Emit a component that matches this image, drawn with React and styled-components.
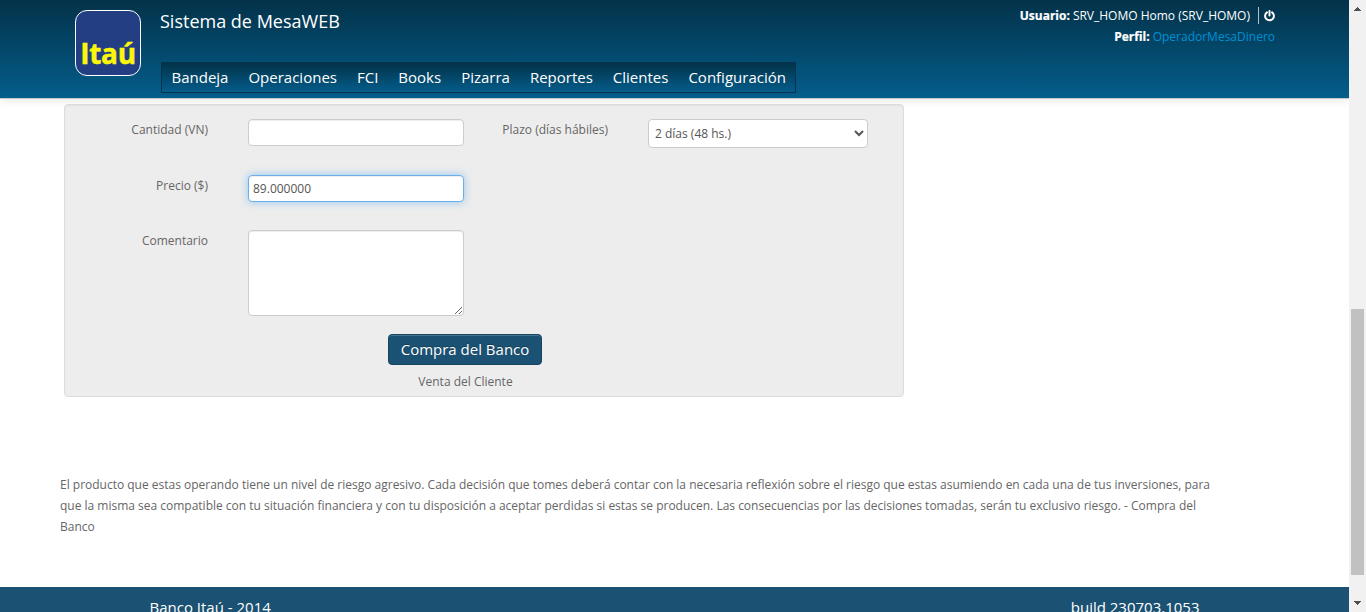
import React from "react";
import styled, { createGlobalStyle } from "styled-components";

const GlobalStyle = createGlobalStyle`
  * { box-sizing: border-box; }
  html, body { margin: 0; overflow: hidden; }
  body {
    background: #fff;
    color: #666;
    font: 12px/21px "Open Sans", sans-serif;
  }
  input, select, textarea, button { font-family: inherit; margin: 0; }
`;

const Window = styled.div`
  display: flex;
  width: 1366px;
  height: 612px;
  overflow: hidden;
`;

const Page = styled.div`
  display: flex;
  flex-direction: column;
  width: 1349px;
  height: 612px;
  overflow: hidden;
`;

const Header = styled.header`
  display: flex;
  flex: none;
  align-items: flex-start;
  height: 99px;
  padding: 0 74px 0 75px;
  background: linear-gradient(#033249, #045d8b);
  border-bottom: 1px solid #c8c8c8;
  box-shadow: 0 1px 10px rgba(0, 0, 0, 0.1);
  color: #fff;
`;

const Logo = styled.div`
  display: flex;
  align-items: flex-end;
  justify-content: center;
  width: 66px;
  height: 66px;
  margin: 10px 20px 0 0;
  padding-bottom: 7px;
  background: #233e83;
  border: 1px solid #fff;
  border-radius: 12px;
  color: #fcf60a;
  font-size: 28px;
  font-weight: 700;
  line-height: 30px;
  letter-spacing: -0.3px;
  -webkit-text-stroke: 0.5px #fcf60a;
`;

const Brand = styled.div`
  display: flex;
  flex-direction: column;
  align-items: flex-start;
`;

const Title = styled.h1`
  height: 21px;
  margin: 11px 0 30px -1px;
  font-size: 18px;
  font-weight: 400;
  line-height: 21px;
  white-space: nowrap;
`;

const Nav = styled.nav`
  display: flex;
  gap: 20px;
  width: 635px;
  height: 31px;
  padding: 0 9.5px;
  border: 1px solid #06344c;
  background: linear-gradient(#033249, #045d8b);
  font-size: 15px;
  line-height: 28px;
  white-space: nowrap;
`;

const Account = styled.div`
  display: flex;
  flex-direction: column;
  align-items: flex-end;
  margin: 5px 0 0 auto;
  white-space: nowrap;
`;

const UserLine = styled.div`
  display: flex;
  align-items: center;
  height: 21px;
  b { margin-right: 3px; -webkit-text-stroke: 0.2px #fff; }
`;

const Divider = styled.span`
  width: 1px;
  height: 17px;
  margin: 0 5px 0 8px;
  background: #b9bfc2;
`;

const Profile = styled.span`
  color: #0090d3;
`;

const Content = styled.main`
  flex: none;
  height: 488px;
  padding: 5px 119px 0 60px;
`;

const Well = styled.section`
  display: flex;
  flex-direction: column;
  width: 840px;
  height: 293px;
  margin-left: 4px;
  padding: 14px 35px 0 36px;
  background: #ededed;
  border: 1px solid #dcdcdc;
  border-radius: 4px;
  box-shadow: inset 0 1px 1px rgba(0, 0, 0, 0.05);
`;

const controlFrame = `
  background: #fff;
  border: 1px solid #ccc;
  border-radius: 4px;
  box-shadow: inset 0 1px 1px rgba(0, 0, 0, 0.075);
  color: #555;
  font-size: 12px;
  outline: none;
`;

const Row = styled.div`
  display: flex;
  align-items: flex-start;
  height: ${(p) => p.$height}px;
`;

const Label = styled.label`
  width: 107px;
  margin-left: ${(p) => p.$offset || 0}px;
  margin-right: 40px;
  text-align: right;
  white-space: nowrap;
`;

const Input = styled.input`
  ${controlFrame}
  width: 216px;
  height: 27px;
  padding: 3px 4px;
  ${(p) => p.$active && `
    border-color: #6bafec;
    box-shadow: inset 0 1px 1px rgba(0,0,0,.075), 0 0 8px rgba(82,168,236,.6);
  `}
`;

const Select = styled.select`
  ${controlFrame}
  width: 220px;
  height: 29px;
  padding: 4px 2px;
  box-shadow: none;
`;

const TextArea = styled.textarea`
  ${controlFrame}
  width: 216px;
  height: 86px;
  resize: both;
`;

const Actions = styled.div`
  display: flex;
  flex-direction: column;
  align-items: center;
  width: 729px;
`;

const Button = styled.button`
  width: 154px;
  height: 31px;
  padding: 0 0 2px;
  margin: 0 1px 6px 0;
  border: 1px solid #154763;
  border-radius: 4px;
  background: #1b5172;
  box-shadow: inset 0 1px 0 rgba(255, 255, 255, 0.2);
  color: #fff;
  font-size: 15px;
  line-height: 20px;
  text-shadow: 0 -1px 0 rgba(0, 0, 0, 0.25);
`;

const Notice = styled.p`
  width: 1170px;
  margin: 77px 0 0;
  letter-spacing: -0.005px;
`;

const Footer = styled.footer`
  display: flex;
  flex: none;
  justify-content: space-between;
  height: 60px;
  padding: 10px 149.5px 0;
  background: #1b5172;
  color: #fff;
  font-size: 15px;
  line-height: 20px;
  white-space: nowrap;
`;

const ScrollTrack = styled.aside`
  display: flex;
  flex-direction: column;
  align-items: center;
  width: 17px;
  height: 612px;
  padding: 7px 0 4px;
  background: #f1f1f1;
`;

const Thumb = styled.div`
  width: 13px;
  height: 266px;
  margin: 298px 0 26px;
  background: #c1c1c1;
`;

function Power() {
  return (
    <svg width="11" height="12" viewBox="0 0 11 12" fill="none" stroke="#fff" strokeWidth="2" strokeLinecap="round">
      <path d="M2.9 2.4a4.4 4.4 0 1 0 5.2 0M5.5 1v4.6" />
    </svg>
  );
}

function Arrow({ down }) {
  return (
    <svg width="7" height="4" viewBox="0 0 7 4" fill="#505050" shapeRendering="crispEdges">
      <path d={down ? "M0 0h7v1H6v1H5v1H4v1H3V3H2V2H1V1H0z" : "M3 0h1v1h1v1h1v1h1v1H0V3h1V2h1V1h1z"} />
    </svg>
  );
}

const sections = ["Bandeja", "Operaciones", "FCI", "Books", "Pizarra", "Reportes", "Clientes", "Configuración"];

export default function App() {
  return (
    <Window>
      <GlobalStyle />
      <Page>
        <Header>
          <Logo>Itaú</Logo>
          <Brand>
            <Title>Sistema de MesaWEB</Title>
            <Nav>{sections.map((name) => <span key={name}>{name}</span>)}</Nav>
          </Brand>
          <Account>
            <UserLine><b>Usuario:</b>SRV_HOMO Homo (SRV_HOMO)<Divider /><Power /></UserLine>
            <UserLine><b>Perfil:</b><Profile>OperadorMesaDinero</Profile></UserLine>
          </Account>
        </Header>
        <Content>
          <Well>
            <Row $height={56}>
              <Label>Cantidad (VN)</Label>
              <Input />
              <Label $offset={37}>Plazo (días hábiles)</Label>
              <Select defaultValue="48"><option value="48">2 días (48 hs.)</option></Select>
            </Row>
            <Row $height={55}>
              <Label>Precio ($)</Label>
              <Input $active defaultValue="89.000000" />
            </Row>
            <Row $height={104}>
              <Label>Comentario</Label>
              <TextArea />
            </Row>
            <Actions>
              <Button>Compra del Banco</Button>
              <span>Venta del Cliente</span>
            </Actions>
          </Well>
          <Notice>
            El producto que estas operando tiene un nivel de riesgo agresivo. Cada decisión que tomes deberá contar con la necesaria reflexión sobre el riesgo que estas asumiendo en cada una de tus inversiones, para que la misma sea compatible con tu situación financiera y con tu disposición a aceptar perdidas si estas se producen. Las consecuencias por las decisiones tomadas, serán tu exclusivo riesgo. - Compra del Banco
          </Notice>
        </Content>
        <Footer><span>Banco Itaú - 2014</span><span>build 230703.1053</span></Footer>
      </Page>
      <ScrollTrack><Arrow /><Thumb /><Arrow down /></ScrollTrack>
    </Window>
  );
}
